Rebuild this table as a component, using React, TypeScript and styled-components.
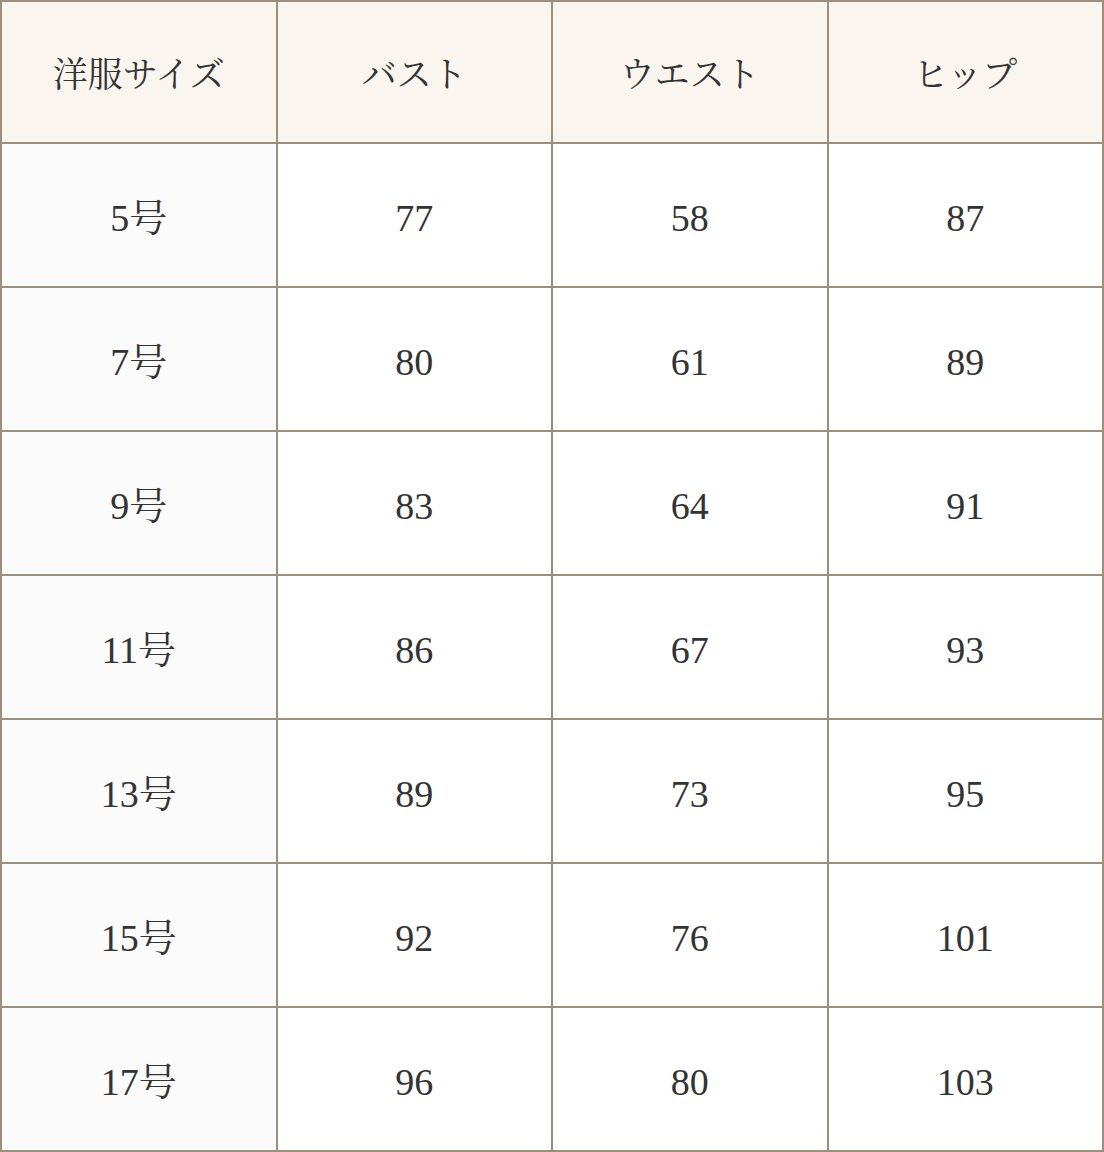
import React from 'react';
import styled, { createGlobalStyle } from 'styled-components';

const GlobalStyle = createGlobalStyle`
  html, body {
    margin: 0;
    padding: 0;
    background: #ffffff;
  }
`;

const LINE = '#9b9080';

const SizeTable = styled.table`
  width: 1104px;
  height: 1152px;
  border-collapse: collapse;
  table-layout: fixed;
  border: 2px solid ${LINE};
  font-family: 'Liberation Serif', 'Noto Serif CJK JP', 'Noto Sans CJK JP', serif;
  color: #333333;
`;

const HeadCell = styled.th`
  height: 134px;
  border: 2px solid ${LINE};
  background: #faf6ef;
  font-size: 35px;
  font-weight: 400;
  line-height: 1;
  text-align: center;
  vertical-align: middle;
  padding: 6px 0 0;
`;

const Cell = styled.td<{ $label?: boolean }>`
  height: 136px;
  border: 2px solid ${LINE};
  background: ${(p) => (p.$label ? '#fbfbfb' : '#ffffff')};
  font-size: 38px;
  line-height: 1;
  text-align: center;
  vertical-align: middle;
  padding: 6px 0 0;
`;

const headers = ['洋服サイズ', 'バスト', 'ウエスト', 'ヒップ'];

const rows = [
  ['5号', '77', '58', '87'],
  ['7号', '80', '61', '89'],
  ['9号', '83', '64', '91'],
  ['11号', '86', '67', '93'],
  ['13号', '89', '73', '95'],
  ['15号', '92', '76', '101'],
  ['17号', '96', '80', '103'],
];

export default function App() {
  return (
    <>
      <GlobalStyle />
      <SizeTable>
        <thead>
          <tr>
            {headers.map((h) => (
              <HeadCell key={h}>{h}</HeadCell>
            ))}
          </tr>
        </thead>
        <tbody>
          {rows.map((row) => (
            <tr key={row[0]}>
              {row.map((value, i) => (
                <Cell key={i} $label={i === 0}>
                  {value}
                </Cell>
              ))}
            </tr>
          ))}
        </tbody>
      </SizeTable>
    </>
  );
}
